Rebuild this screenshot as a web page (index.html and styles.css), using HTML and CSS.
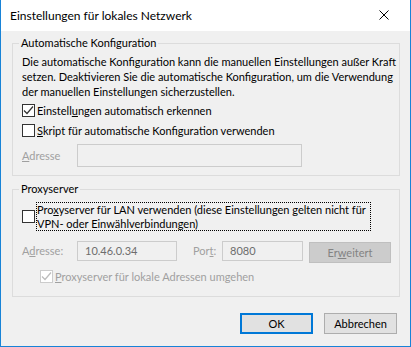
FILE: index.html
```html
<!DOCTYPE html>
<html lang="de">
<head>
    <meta charset="UTF-8">
    <title>Einstellungen für lokales Netzwerk</title>
    <link rel="stylesheet" href="styles.css">
</head>
<body>
    <div class="window">
        <div class="titlebar">
            <span class="title">Einstellungen für lokales Netzwerk</span>
            <svg class="close" width="10" height="10" viewBox="0 0 10 10">
                <path d="M0.5 0.5 L9.5 9.5 M9.5 0.5 L0.5 9.5" stroke="#000" stroke-width="1" fill="none"/>
            </svg>
        </div>

        <div class="content">
            <fieldset class="group group-auto">
                <legend>Automatische Konfiguration</legend>
                <p class="desc">Die automatische Konfiguration kann die manuellen Einstellungen außer Kraft<br>
                    setzen. Deaktivieren Sie die automatische Konfiguration, um die Verwendung<br>
                    der manuellen Einstellungen sicherzustellen.</p>

                <div class="check-row first">
                    <span class="box">
                        <svg width="11" height="11" viewBox="0 0 11 11">
                            <path d="M1 5.5 L4 8.5 L10 1.5" stroke="#333" stroke-width="1.2" fill="none"/>
                        </svg>
                    </span>
                    <span>Einstell<u>u</u>ngen automatisch erkennen</span>
                </div>
                <div class="check-row">
                    <span class="box"></span>
                    <span><u>S</u>kript für automatische Konfiguration verwenden</span>
                </div>
                <div class="field-row">
                    <span class="label disabled"><u>A</u>dresse</span>
                    <span class="input input-script"></span>
                </div>
            </fieldset>

            <fieldset class="group group-proxy">
                <legend>Proxyserver</legend>
                <div class="check-row lan">
                    <span class="box"></span>
                    <span class="focus">Pro<u>x</u>yserver für LAN verwenden (diese Einstellungen gelten nicht für<br>
                        VPN- oder Einwählverbindungen)</span>
                </div>
                <div class="proxy-row">
                    <span class="label label-addr disabled">A<u>d</u>resse:</span>
                    <span class="input input-addr">10.46.0.34</span>
                    <span class="label label-port disabled">Por<u>t</u>:</span>
                    <span class="input input-port">8080</span>
                    <span class="btn btn-disabled">Er<u>w</u>eitert</span>
                </div>
                <div class="check-row bypass disabled">
                    <span class="box box-disabled">
                        <svg width="11" height="11" viewBox="0 0 11 11">
                            <path d="M1 5.5 L4 8.5 L10 1.5" stroke="#bcbcbc" stroke-width="1.2" fill="none"/>
                        </svg>
                    </span>
                    <span><u>P</u>roxyserver für lokale Adressen umgehen</span>
                </div>
            </fieldset>

            <div class="buttons">
                <span class="btn btn-default">OK</span>
                <span class="btn">Abbrechen</span>
            </div>
        </div>
    </div>
</body>
</html>
```

FILE: styles.css
```css
* {
    box-sizing: border-box;
}
body {
    margin: 0;
    font-family: Lato, "Noto Sans", sans-serif;
    font-size: 11px;
    color: #000;
    background: #fff;
}
.window {
    width: 411px;
    height: 347px;
    border: 1px solid #1883d7;
    border-top: none;
    background: #f0f0f0;
    display: flex;
    flex-direction: column;
}
.titlebar {
    height: 31px;
    flex: none;
    background: #fff;
    display: flex;
    align-items: center;
    padding: 0 21px 0 9px;
    justify-content: space-between;
}
.title {
    font-size: 12px;
    padding-bottom: 1px;
}
.close {
    margin-bottom: 1px;
}
.content {
    padding: 4px 10px 0 11px;
    flex: 1;
}
.group {
    margin: 0;
    border: 1px solid #dcdcdc;
    padding: 0 8px 8px 9px;
    min-width: 0;
}
.group legend {
    padding: 0 2px;
    margin-left: -3px;
    line-height: 16px;
}
.desc {
    margin: 3px 0 0;
    line-height: 15px;
    white-space: nowrap;
}
.check-row {
    display: flex;
    align-items: center;
    height: 17px;
    margin-top: 3px;
    line-height: 15px;
}
.check-row.first {
    margin-top: 3px;
}
.box {
    width: 13px;
    height: 13px;
    border: 1px solid #333;
    background: #fff;
    margin-right: 2px;
    flex: none;
    display: flex;
    align-items: center;
    justify-content: center;
}
.box-disabled {
    border-color: #cccccc;
}
.disabled {
    color: #a0a0a0;
}
.field-row {
    display: flex;
    align-items: center;
    margin-top: 5px;
}
.label {
    flex: none;
}
.field-row .label {
    width: 55px;
}
.input {
    display: flex;
    align-items: center;
    border: 1px solid #cccccc;
    background: #f0f0f0;
    color: #6d6d6d;
    padding: 0 0 1px 7px;
}
.input-script {
    width: 225px;
    height: 23px;
}
.group-proxy {
    margin-top: 5px;
    padding-bottom: 11px;
}
.check-row.lan {
    height: auto;
    margin-top: 5px;
}
.focus {
    border: 1px dotted #000;
    width: 335px;
    line-height: 13.5px;
    white-space: nowrap;
    margin-left: -1px;
}
.proxy-row {
    display: flex;
    align-items: flex-start;
    margin-top: 10px;
}
.label-addr {
    width: 55px;
    line-height: 20px;
}
.input-addr {
    width: 100px;
    height: 20px;
}
.label-port {
    margin-left: 16px;
    width: 29px;
    line-height: 20px;
}
.input-port {
    width: 81px;
    height: 20px;
}
.btn {
    display: flex;
    align-items: center;
    justify-content: center;
    width: 73px;
    height: 21px;
    border: 1px solid #adadad;
    background: #e1e1e1;
    padding-bottom: 1px;
}
.btn-disabled {
    width: 82px;
    margin: 1px 0 0 6px;
    background: #cccccc;
    border-color: #bfbfbf;
    color: #838383;
}
.check-row.bypass {
    margin: 5px 0 0 18px;
}
.buttons {
    display: flex;
    justify-content: flex-end;
    gap: 11px;
    margin: 16px 3px 0 0;
}
.btn-default {
    border: 2px solid #0078d7;
}
```
